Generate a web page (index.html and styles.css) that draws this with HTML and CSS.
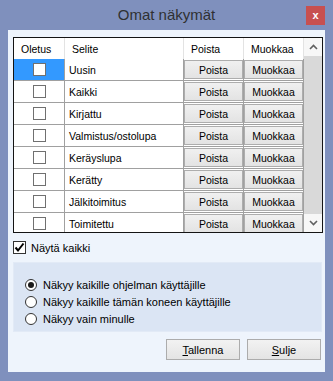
FILE: index.html
```html
<!DOCTYPE html>
<html lang="fi">
  <head>
    <meta charset="UTF-8" />
    <meta name="viewport" content="width=device-width, initial-scale=1.0" />
    <title>Omat näkymät</title>
    <link rel="stylesheet" href="styles.css">
  </head>
  <body>
    <div class="window">
      <div class="titlebar">
        <span></span>
        <h1 class="title">Omat näkymät</h1>
        <button class="close">x</button>
      </div>

      <div class="client">
        <div class="grid">
          <div class="grid-table">
            <div class="head">Oletus</div>
            <div class="head">Selite</div>
            <div class="head">Poista</div>
            <div class="head">Muokkaa</div>

            <div class="cell check selected"><span class="box"></span></div>
            <div class="cell text">Uusin</div>
            <div class="cell btn"><button>Poista</button></div>
            <div class="cell btn"><button>Muokkaa</button></div>

            <div class="cell check"><span class="box"></span></div>
            <div class="cell text">Kaikki</div>
            <div class="cell btn"><button>Poista</button></div>
            <div class="cell btn"><button>Muokkaa</button></div>

            <div class="cell check"><span class="box"></span></div>
            <div class="cell text">Kirjattu</div>
            <div class="cell btn"><button>Poista</button></div>
            <div class="cell btn"><button>Muokkaa</button></div>

            <div class="cell check"><span class="box"></span></div>
            <div class="cell text">Valmistus/ostolupa</div>
            <div class="cell btn"><button>Poista</button></div>
            <div class="cell btn"><button>Muokkaa</button></div>

            <div class="cell check"><span class="box"></span></div>
            <div class="cell text">Keräyslupa</div>
            <div class="cell btn"><button>Poista</button></div>
            <div class="cell btn"><button>Muokkaa</button></div>

            <div class="cell check"><span class="box"></span></div>
            <div class="cell text">Kerätty</div>
            <div class="cell btn"><button>Poista</button></div>
            <div class="cell btn"><button>Muokkaa</button></div>

            <div class="cell check"><span class="box"></span></div>
            <div class="cell text">Jälkitoimitus</div>
            <div class="cell btn"><button>Poista</button></div>
            <div class="cell btn"><button>Muokkaa</button></div>

            <div class="cell check"><span class="box"></span></div>
            <div class="cell text">Toimitettu</div>
            <div class="cell btn"><button>Poista</button></div>
            <div class="cell btn"><button>Muokkaa</button></div>
          </div>

          <div class="scrollbar">
            <div class="arrow">
              <svg width="9" height="6" viewBox="0 0 9 6"><polyline points="1,5 4.5,1.5 8,5" fill="none" stroke="#606060" stroke-width="1.6"/></svg>
            </div>
            <div class="thumb"></div>
            <div class="arrow">
              <svg width="9" height="6" viewBox="0 0 9 6"><polyline points="1,1 4.5,4.5 8,1" fill="none" stroke="#606060" stroke-width="1.6"/></svg>
            </div>
          </div>
        </div>

        <label class="show-all">
          <span class="checkbox">
            <svg width="11" height="11" viewBox="0 0 11 11"><polyline points="1.5,5.5 4,8.5 9.5,1.5" fill="none" stroke="#000" stroke-width="2"/></svg>
          </span>
          Näytä kaikki
        </label>

        <div class="visibility">
          <label class="radio-row"><span class="radio checked"></span>Näkyy kaikille ohjelman käyttäjille</label>
          <label class="radio-row"><span class="radio"></span>Näkyy kaikille tämän koneen käyttäjille</label>
          <label class="radio-row"><span class="radio"></span>Näkyy vain minulle</label>
        </div>

        <div class="actions">
          <button class="action"><u>T</u>allenna</button>
          <button class="action"><u>S</u>ulje</button>
        </div>
      </div>
    </div>
  </body>
</html>
```

FILE: styles.css
```css
body {
  margin: 0;
  font-family: "Liberation Sans", Arial, sans-serif;
  font-size: 11px;
  color: #000;
  background: #fff;
}
.window {
  width: 333px;
  height: 381px;
  box-sizing: border-box;
  padding: 0 8px 9px;
  background: #7f90bd;
  display: flex;
  flex-direction: column;
}
.titlebar {
  height: 30px;
  display: grid;
  grid-template-columns: 19px 1fr 19px;
  align-items: start;
}
.title {
  margin: 0;
  text-align: center;
  font-size: 15px;
  font-weight: normal;
  line-height: 30px;
  color: #2f3032;
}
.close {
  margin-top: 6px;
  width: 19px;
  height: 19px;
  padding: 0;
  border: none;
  background: #c75050;
  color: #fff;
  font-family: "Liberation Sans", Arial, sans-serif;
  font-size: 11px;
  font-weight: bold;
  line-height: 17px;
}
.client {
  flex: 1;
  background: #eef4fc;
  padding: 7px 2px 0 5px;
  display: flex;
  flex-direction: column;
}

/* data grid */
.grid {
  width: 310px;
  height: 196px;
  box-sizing: border-box;
  border: 1px solid #141414;
  background: #fff;
  display: flex;
}
.grid-table {
  width: 290px;
  display: grid;
  grid-template-columns: 51px 119px 60px 60px;
  grid-template-rows: 21px;
  grid-auto-rows: 22px;
  overflow: hidden;
  font-size: 10.5px;
}
.head {
  box-sizing: border-box;
  border-right: 1px solid #e3e3e3;
  padding-left: 7px;
  display: flex;
  align-items: center;
  background: #fff;
}
.cell {
  box-sizing: border-box;
  border-right: 1px solid #a0a0a0;
  border-bottom: 1px solid #a0a0a0;
  display: flex;
  align-items: center;
}
.check {
  justify-content: center;
}
.selected {
  background: #3399ff;
}
.box {
  width: 13px;
  height: 13px;
  box-sizing: border-box;
  border: 1px solid #707070;
  background: #fff;
}
.text {
  padding-left: 4px;
}
.btn button {
  width: 100%;
  height: 19px;
  padding: 0;
  border: 1px solid #adadad;
  background: linear-gradient(#f0f0f0, #e3e3e3);
  font-family: inherit;
  font-size: 10.5px;
  color: #000;
}
.scrollbar {
  width: 18px;
  display: flex;
  flex-direction: column;
  background: #f0f0f0;
}
.arrow {
  height: 18px;
  display: flex;
  align-items: center;
  justify-content: center;
  background: #f7f7f7;
}
.thumb {
  height: 158px;
  background: #d9d9d9;
}

/* options */
.show-all {
  margin-top: 8px;
  height: 13px;
  display: flex;
  align-items: center;
  gap: 5px;
}
.checkbox {
  width: 13px;
  height: 13px;
  box-sizing: border-box;
  border: 1px solid #333;
  background: #fff;
  display: flex;
  align-items: center;
  justify-content: center;
}
.visibility {
  margin-top: 8px;
  width: 309px;
  height: 70px;
  box-sizing: border-box;
  padding: 13px 0 0 11px;
  background: #dbe5f4;
  border: 1px solid #e2eaf6;
}
.radio-row {
  height: 17px;
  display: flex;
  align-items: center;
  gap: 6px;
}
.radio {
  width: 12px;
  height: 12px;
  box-sizing: border-box;
  border: 1px solid #333;
  border-radius: 50%;
  background: #fff;
  display: flex;
  align-items: center;
  justify-content: center;
}
.radio.checked::after {
  content: "";
  width: 6px;
  height: 6px;
  border-radius: 50%;
  background: #1a1a1a;
}
.actions {
  margin-top: 7px;
  padding-right: 2px;
  display: flex;
  justify-content: flex-end;
  gap: 7px;
}
.action {
  width: 74px;
  height: 21px;
  padding: 0;
  border: 1px solid #acacac;
  background: linear-gradient(#f2f2f2, #e4e4e4);
  font-family: inherit;
  font-size: 11px;
  color: #000;
}
```
